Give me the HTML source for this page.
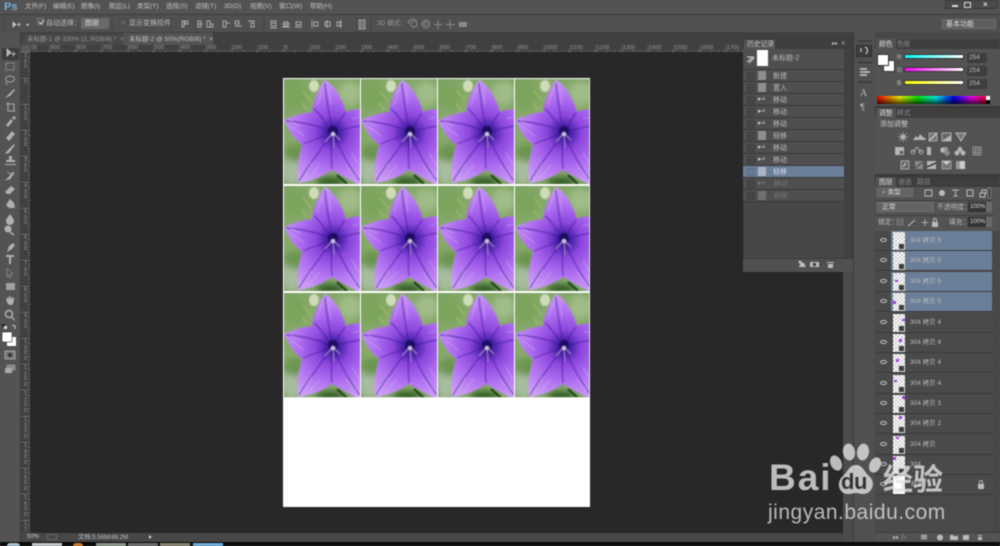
<!DOCTYPE html>
<html><head><meta charset="utf-8">
<style>
html,body{margin:0;padding:0;background:#535353}
#p{position:relative;width:1000px;height:546px;overflow:hidden;background:#535353;font-family:"Liberation Sans","Noto Sans CJK SC",sans-serif;color:#bdbdbd;font-size:6.5px;filter:blur(.45px)}
#p div{position:absolute;white-space:nowrap}
.m{top:3px;line-height:8px;color:#c2c2c2}
.o{color:#bdbdbd;line-height:9px}
.rt{top:45px;line-height:7px;font-size:5.5px;color:#999;width:20px}
.rv{left:23px;width:5px;font-size:5.5px;line-height:5.6px;color:#999;text-align:center;white-space:normal!important}
.h{left:743px;width:101px;height:11px;background:#4f4f4f;border-bottom:1px solid #393939}
.h .c{left:4px;top:2px;width:6px;height:6px;background:#474747;border:1px solid #3e3e3e}
.h .t{left:30px;top:1.5px;line-height:9px;color:#bdbdbd;font-size:7px}
.h .i{left:15px;top:1px;width:8px;height:9px;background:#8f8f8f}
.h .v{left:15px;top:1px}
.l{left:875px;width:118px;height:19.4px;border-bottom:1px solid #393939;background:#4a4a4a}
.l .s{left:16px;top:0;width:101px;height:19.4px}
.l .tb{left:18px;top:1px;width:12px;height:18px;background:#fff;background-image:linear-gradient(45deg,#ccc 25%,transparent 25%,transparent 75%,#ccc 75%),linear-gradient(45deg,#ccc 25%,transparent 25%,transparent 75%,#ccc 75%);background-size:4px 4px;background-position:0 0,2px 2px}
.l .n{left:35px;top:5px;font-size:6.5px;line-height:9px;color:#bdbdbd}
.l .e{left:5px;top:7px;width:7px;height:4px;border:1px solid #c8c8c8;border-radius:50%/50%;box-sizing:border-box}
.l .cor{left:23px;top:12px;width:7px;height:7px;background:#3e3e3e;border:1px solid #ddd;box-sizing:border-box}
.l .dot{width:2.5px;height:2.5px;background:#a23fe8}
.tab{color:#aaa;line-height:9px}
</style></head><body>
<div id="p">
<!-- bars -->
<div style="left:0;top:0;width:1000px;height:14px;background:#535353;border-bottom:1px solid #3c3c3c"></div>
<div style="left:0;top:15px;width:1000px;height:17px;background:#505050"></div>
<div style="left:0;top:32px;width:1000px;height:13px;background:#404040"></div>
<div style="left:4px;top:1px;font-size:11px;font-weight:bold;line-height:12px;color:#6fb2dc">Ps</div>
<div class="m" style="left:25px">文件(F)</div><div class="m" style="left:53px">编辑(E)</div><div class="m" style="left:81px">图像(I)</div><div class="m" style="left:109px">图层(L)</div><div class="m" style="left:137px">类型(Y)</div><div class="m" style="left:166px">选择(S)</div><div class="m" style="left:195px">滤镜(T)</div><div class="m" style="left:224px">3D(D)</div><div class="m" style="left:250px">视图(V)</div><div class="m" style="left:279px">窗口(W)</div><div class="m" style="left:310px">帮助(H)</div>
<!-- window buttons -->
<div style="left:945px;top:0;width:53px;height:9px;background:#4a4a4a;border:1px solid #3a3a3a;box-sizing:border-box"></div>
<div style="left:952px;top:5px;width:6px;height:1.5px;background:#ddd"></div>
<div style="left:964px;top:2px;width:5px;height:4px;border:1px solid #ddd"></div>
<div style="left:983px;top:0;line-height:9px;color:#ddd;font-size:8px;font-weight:bold">×</div>
<!-- options -->
<div style="left:37px;top:18px;width:7px;height:7px;background:#5a5a5a;border:1px solid #777;box-sizing:border-box;"></div>
<div class="o" style="left:46px;top:19px;font-size:7px">自动选择：</div>
<div style="left:81px;top:18px;width:28px;height:11px;background:#6a6a6a;border-radius:1px"></div>
<div class="o" style="left:85px;top:19px;font-size:7px;color:#ddd">图层</div>
<div style="left:120px;top:19px;width:7px;height:7px;background:#5e5e5e;border:1px solid #444;box-sizing:border-box"></div>
<div class="o" style="left:129px;top:19px;font-size:7px">显示变换控件</div>
<div class="o" style="left:377px;top:19px;font-size:6.5px;color:#9a9a9a">3D 模式：</div>
<div style="left:942px;top:19px;width:54px;height:10px;background:#5e5e5e;border:1px solid #6e6e6e;box-sizing:border-box"></div>
<div class="o" style="left:946px;top:19.5px;font-size:7px;color:#ddd">基本功能</div>
<!-- options icons -->
<svg style="position:absolute;left:0;top:14px" width="430" height="20" fill="none" stroke="#b0b0b0" stroke-width="1">
<path d="M4 3V17M112 3V17M171 3V17M264 3V17M357 3V17M371 3V17" stroke="#444"/>
<path d="M13 8v5l3-2.500zM17 10.500h4M19 8.500v4M26 10l1.500 1.500L29 10" fill="#ccc" stroke="#ccc" stroke-width=".7"/>
<path d="M39 8l2 2 3-4" stroke="#ddd"/>
<path d="M182 7h2v6h-2zM185 7h3v3h-3zM197 10h6M198 7h3v6h-3zM207 7h3v6h-3zM210 10h3v3h-3zM223 7h3v6h-3zM226 9h4M235 7h4v3h-4zM235 12h7M248 7h7M251 9h3v4h-3zM270 7h7M271 9h5v3h-5zM270 14h7M282 10h8M284 8h4v4h-4zM282 13h8M296 8h5v3h-5zM295 13h7M312 6v8M314 8h4v4h-4zM327 6v8M325 8h5v4h-5zM341 6v8M337 8h3v4h-3zM359 6h2v9h-2zM363 6h2v9h-2z" stroke-width=".9"/>
<g stroke="#8a8a8a"><circle cx="414" cy="10" r="3"/><path d="M409 10a4 3 0 0 1 8-3"/><circle cx="426" cy="10" r="4"/><circle cx="426" cy="10" r="2"/></g>
</svg>
<svg style="position:absolute;left:430px;top:14px" width="30" height="20" fill="none" stroke="#8a8a8a"><path d="M8 6v9M4 10.500h8M20 6v9M16 10.500h9"/></svg>
<svg style="position:absolute;left:458px;top:14px" width="12" height="20" fill="#8a8a8a"><rect x="1" y="8" width="8" height="5"/></svg>
<!-- tabs -->
<div style="left:22px;top:34px;width:100px;height:11px;background:#484848"></div>
<div style="left:123px;top:33px;width:90px;height:12px;background:#535353"></div>
<div class="tab" style="left:27px;top:34.500px;font-size:6.500px;color:#999">未标题-1 @ 100% (2, RGB/8) * &nbsp;×</div>
<div class="tab" style="left:129px;top:34.500px;font-size:6.500px;color:#c2c2c2">未标题-2 @ 50%(RGB/8) * &nbsp;×</div>
<!-- left tools -->
<div style="left:0;top:32px;width:21px;height:510px;background:#535353;border-right:1px solid #3d3d3d;box-sizing:border-box"></div>
<div style="left:2px;top:48px;width:17px;height:12px;background:#3c3c3c"></div>
<!-- canvas -->
<div style="left:21px;top:45px;width:822px;height:488px;background:#282828"></div>
<div style="left:21px;top:45px;width:822px;height:7px;background:#404040"></div>
<div style="left:21px;top:45px;width:9px;height:488px;background:#404040"></div>
<div style="left:21px;top:45px;width:9px;height:7px;background:#5a5a5a"></div>
<!-- ruler ticks -->
<div style="left:30px;top:50px;width:813px;height:2px;background:repeating-linear-gradient(90deg,#7a7a7a 0,#7a7a7a .6px,transparent .6px,transparent 2.600px)"></div>
<div style="left:28px;top:52px;width:2px;height:481px;background:repeating-linear-gradient(180deg,#7a7a7a 0,#7a7a7a .6px,transparent .6px,transparent 2.600px)"></div>
<div style="left:30px;top:45px;width:813px;height:7px;background:repeating-linear-gradient(90deg,transparent 0,transparent 20px,#8a8a8a 20px,#8a8a8a 20.600px,transparent 20.600px,transparent 26px)"></div>
<div style="left:21px;top:52px;width:9px;height:481px;background:repeating-linear-gradient(180deg,#8a8a8a 0,#8a8a8a .6px,transparent .6px,transparent 26px);background-size:9px 26px"></div>
<div class="rt" style="left:31px">00</div><div class="rt" style="left:51px">900</div><div class="rt" style="left:77px">800</div><div class="rt" style="left:103px">700</div><div class="rt" style="left:129px">600</div><div class="rt" style="left:155px">500</div><div class="rt" style="left:181px">400</div><div class="rt" style="left:207px">300</div><div class="rt" style="left:233px">200</div><div class="rt" style="left:259px">100</div><div class="rt" style="left:285px">0</div><div class="rt" style="left:311px">100</div><div class="rt" style="left:337px">200</div><div class="rt" style="left:363px">300</div><div class="rt" style="left:389px">400</div><div class="rt" style="left:415px">500</div><div class="rt" style="left:441px">600</div><div class="rt" style="left:467px">700</div><div class="rt" style="left:493px">800</div><div class="rt" style="left:519px">900</div><div class="rt" style="left:545px">1000</div><div class="rt" style="left:571px">1100</div><div class="rt" style="left:597px">1200</div><div class="rt" style="left:623px">1300</div><div class="rt" style="left:649px">1400</div><div class="rt" style="left:675px">1500</div><div class="rt" style="left:701px">1600</div><div class="rt" style="left:727px">1700</div>
<div class="rv" style="top:54px">1<br>0<br>0</div><div class="rv" style="top:80px">0</div><div class="rv" style="top:106px">1<br>0<br>0</div><div class="rv" style="top:132px">2<br>0<br>0</div><div class="rv" style="top:158px">3<br>0<br>0</div><div class="rv" style="top:184px">4<br>0<br>0</div><div class="rv" style="top:210px">5<br>0<br>0</div><div class="rv" style="top:236px">6<br>0<br>0</div><div class="rv" style="top:262px">7<br>0<br>0</div><div class="rv" style="top:288px">8<br>0<br>0</div><div class="rv" style="top:314px">9<br>0<br>0</div><div class="rv" style="top:340px">1<br>0<br>0<br>0</div><div class="rv" style="top:366px">1<br>1<br>0<br>0</div><div class="rv" style="top:392px">1<br>2<br>0<br>0</div><div class="rv" style="top:418px">1<br>3<br>0<br>0</div><div class="rv" style="top:444px">1<br>4<br>0<br>0</div><div class="rv" style="top:470px">1<br>5<br>0<br>0</div><div class="rv" style="top:496px">1<br>6<br>0<br>0</div><div class="rv" style="top:522px">1<br>7</div>
<!-- document -->
<div style="left:283px;top:78px;width:307px;height:429px;background:#fff"></div>
<svg style="position:absolute;left:283px;top:78px" width="307" height="321" viewBox="0 0 307 321">
<defs>
<radialGradient id="bg" cx=".5" cy=".5" r=".75"><stop offset="0" stop-color="#8dab72"/><stop offset=".6" stop-color="#87a96c"/><stop offset="1" stop-color="#78a05e"/></radialGradient>
<radialGradient id="pt" gradientUnits="userSpaceOnUse" cx="49" cy="54" r="58"><stop offset="0" stop-color="#2a1278"/><stop offset=".13" stop-color="#4c24ac"/><stop offset=".3" stop-color="#8c46dc"/><stop offset=".58" stop-color="#ad6cf0"/><stop offset="1" stop-color="#d0a6f6"/></radialGradient>
<filter id="b1" x="-10%" y="-10%" width="120%" height="120%"><feGaussianBlur stdDeviation=".6"/></filter>
<filter id="b3" x="-20%" y="-20%" width="140%" height="140%"><feGaussianBlur stdDeviation="3.5"/></filter>
<clipPath id="cell"><rect width="76" height="105"/></clipPath>
<g id="fl" clip-path="url(#cell)">
<rect width="76" height="105" fill="url(#bg)"/>
<g filter="url(#b3)"><ellipse cx="12" cy="18" rx="12" ry="14" fill="#7ca45c"/><ellipse cx="66" cy="14" rx="12" ry="12" fill="#a0bc88"/><ellipse cx="8" cy="90" rx="10" ry="16" fill="#a8bda0"/><ellipse cx="46" cy="103" rx="14" ry="5" fill="#2e5a24"/><ellipse cx="12" cy="74" rx="12" ry="9" fill="#6a9450"/></g>
<ellipse cx="30" cy="7" rx="5" ry="6" fill="#cfdcb8" filter="url(#b1)"/>
<path d="M19 12l8 10M18 24l5 7" stroke="#a8c266" stroke-width="1" filter="url(#b1)"/>
<path d="M53 96l10 9" stroke="#1c3a14" stroke-width="2" filter="url(#b1)"/>
<path d="M41 1C50 5 58 20 62 33C68 30 74 30 80 31L80 108C70 104 58 97 48 91C38 98 26 103 14 104C12 92 14 78 18 66C10 60 4 51 0 41C8 37 18 34 28 33C29 22 35 8 41 1Z" fill="url(#pt)" filter="url(#b1)"/>
<g fill="none" stroke="#3f1c9e" stroke-width=".9" filter="url(#b1)" opacity=".8">
<path d="M49 54C46 40 42 20 41 4M49 54C38 47 18 43 2 42M49 54C60 50 70 48 76 47M49 54C40 66 26 84 15 102M49 54C56 70 66 90 76 102M49 54C47 68 47 80 48 90M49 54C40 42 34 32 30 30M49 54C54 44 58 38 61 34M49 54C38 58 26 62 19 65"/>
</g>
<g fill="none" stroke="#d8b8f8" stroke-width=".8" opacity=".6" filter="url(#b1)"><path d="M33 26L38 10M47 26L45 10M16 47L6 42M20 57L8 48M28 84L18 100M36 86L24 100M62 86L72 98M68 74L75 86M68 40L75 38"/></g>
<circle cx="49" cy="52" r="5" fill="#1c1060" filter="url(#b1)"/>
<path d="M49 54l-8 9M49 54l1 15M49 54l7 7" stroke="#b4a0c6" stroke-width="1" filter="url(#b1)"/>
<circle cx="49" cy="55" r="2.300" fill="#d0c3e6" filter="url(#b1)"/>
</g>
</defs>
<use href="#fl" x="1" y="1"/><use href="#fl" x="78" y="1"/><use href="#fl" x="155" y="1"/><use href="#fl" x="232" y="1"/>
<use href="#fl" x="1" y="108"/><use href="#fl" x="78" y="108"/><use href="#fl" x="155" y="108"/><use href="#fl" x="232" y="108"/>
<use href="#fl" x="1" y="215"/><use href="#fl" x="78" y="215"/><use href="#fl" x="155" y="215"/><use href="#fl" x="232" y="215"/>
<path d="M0 0H307V320H0Z" fill="none" stroke="#fff" stroke-width="1.500"/>
</svg>
<!-- tool icons -->
<svg style="position:absolute;left:0;top:45px" width="21" height="340" viewBox="0 45 21 340" fill="#b0b0b0" stroke="none">
<path d="M7 49v7l4-3.500zM11 54h5M13.500 51.500v5" stroke="#ccc" stroke-width=".8"/>
<rect x="6" y="63" width="8" height="7" fill="none" stroke="#a8a8a8" stroke-dasharray="1.500 1"/>
<ellipse cx="10" cy="79" rx="4.500" ry="3" fill="none" stroke="#a8a8a8"/><path d="M6 82l1 3" stroke="#a8a8a8"/>
<path d="M6 97l3-3 5-5 1 1-5 6zM5 98l2-2 1 1z"/>
<path d="M8 102v9h7M6 104h8v8" fill="none" stroke="#a8a8a8" stroke-width="1.100"/>
<path d="M6 125l5-6 2 2-5 6zM12 118l2-2 2 2-2 2z"/>
<path d="M6 138l6-7 3 3-6 7z"/>
<path d="M5 154l2-3 7-7 1 1-6 8z"/>
<path d="M9 156h3v4h3v2H6v-2h3zM5 164h11v1H5z"/>
<path d="M6 180l3-3 4-5 1 1-4 6zM7 172l4 2" stroke="#a8a8a8" stroke-width=".7"/>
<path d="M5 192l6-6 4 3-5 5h-3z"/>
<path d="M10 199l4 4 1 5-6 0-3-3z"/>
<path d="M10 214c2 3 4 5 4 7a4 4 0 0 1-8 0c0-2 2-4 4-7z"/>
<circle cx="8" cy="229" r="3.500"/><path d="M10 232l4 3" stroke="#b0b0b0" stroke-width="1.500"/>
<path d="M7 252l2-6 4-3 2 2-3 4z"/>
<path d="M6 255h8v2h-3v7H9v-7H6z"/>
<path d="M7 268l6 6-3 .5 1 3-1 .5-1.500-3-1.500 1.500z" stroke="#b0b0b0" stroke-width=".5" fill="none"/>
<rect x="6" y="283" width="9" height="7" fill="#a0a0a0"/>
<path d="M6 300c2-2 1-3 2-3l1 2v-3h1v3l1-3 1 3 1-2 1 1c0 4-1 8-4 7-2 0-3-3-4-5z"/>
<circle cx="9" cy="314" r="3.500" fill="none" stroke="#b0b0b0" stroke-width="1.500"/><path d="M11.500 317l3 3" stroke="#b0b0b0" stroke-width="1.500"/>
<rect x="2" y="324" width="3" height="3" fill="#222"/><rect x="4" y="326" width="3" height="3" fill="#ddd"/><path d="M12 325l3 1v3" fill="none" stroke="#ccc"/>
<rect x="7" y="337" width="9" height="9" fill="#fff"/><rect x="2" y="332" width="10" height="10" fill="#fff" stroke="#333" stroke-width=".6"/>
<rect x="5" y="351" width="10" height="8" fill="#777" stroke="#bbb" stroke-width=".7"/><circle cx="10" cy="355" r="2" fill="#333"/>
<rect x="7" y="365" width="8" height="5" fill="#888" stroke="#aaa" stroke-width=".6"/><rect x="5" y="368" width="7" height="5" fill="#aaa"/>
</svg>
<!-- status bar -->
<div style="left:21px;top:533px;width:822px;height:9px;background:#474747"></div>
<div style="left:27px;top:534px;line-height:7px;font-size:6px;color:#ccc">50%</div>
<div style="left:47px;top:534px;width:10px;height:6px;border:1px solid #666;box-sizing:border-box"></div>
<div style="left:78px;top:534px;line-height:7px;font-size:6.200px;color:#bdbdbd">文档:5.56M/48.2M</div>
<div style="left:149px;top:535px;width:0;height:0;border-left:3px solid #ccc;border-top:2.500px solid transparent;border-bottom:2.500px solid transparent"></div>
<!-- taskbar -->
<div style="left:0;top:542px;width:1000px;height:4px;background:#0a0a0a"></div>
<div style="left:7px;top:543px;width:13px;height:3px;background:#a8c8da;border-radius:6px 6px 0 0"></div>
<div style="left:32px;top:543px;width:30px;height:3px;background:#c6ccd0"></div>
<div style="left:73px;top:543px;width:10px;height:3px;background:#d77a20;border-radius:5px 5px 0 0"></div>
<div style="left:96px;top:543px;width:30px;height:3px;background:#8a9a8a"></div>
<div style="left:128px;top:543px;width:30px;height:3px;background:#6e6e6e"></div>
<div style="left:160px;top:543px;width:30px;height:3px;background:#8a8470"></div>
<div style="left:193px;top:543px;width:30px;height:3px;background:#6fb0e0"></div>
<!-- history panel -->
<div style="left:843px;top:45px;width:10px;height:497px;background:#4c4c4c"></div>
<div style="left:853px;top:32px;width:22px;height:510px;background:#505050;border-left:1px solid #3a3a3a;box-sizing:border-box"></div>
<div style="left:743px;top:38px;width:110px;height:234px;background:#474747;border:1px solid #3a3a3a;box-sizing:border-box"></div>
<div style="left:743px;top:39px;width:110px;height:10px;background:#3e3e3e"></div>
<div style="left:744px;top:40px;width:31px;height:9px;background:#535353"></div>
<div style="left:747px;top:40px;line-height:9px;font-size:6.800px;color:#c2c2c2">历史记录</div>
<div style="left:832px;top:40px;line-height:8px;font-size:6px;color:#bbb">▸▸ &nbsp;≡</div>
<div class="h" style="top:49px;height:20px"><div style="left:14px;top:1px;width:11px;height:16px;background:#fff"></div><div class="t" style="left:29px;top:5px">未标题-2</div></div>
<svg style="position:absolute;left:746px;top:55px" width="9" height="9"><path d="M1 7l6-5M1 2h7M3 8l5-5" stroke="#ddd" fill="none"/></svg>
<div class="h" style="top:70px"><div class="c"></div><div class="i"></div><div class="t">新建</div></div>
<div class="h" style="top:82px"><div class="c"></div><div class="i"></div><div class="t">置入</div></div>
<div class="h" style="top:94px"><div class="c"></div><div class="v" style="color:#ccc;font-size:7px;line-height:9px">▸+</div><div class="t">移动</div></div>
<div class="h" style="top:106px"><div class="c"></div><div class="v" style="color:#ccc;font-size:7px;line-height:9px">▸+</div><div class="t">移动</div></div>
<div class="h" style="top:118px"><div class="c"></div><div class="v" style="color:#ccc;font-size:7px;line-height:9px">▸+</div><div class="t">移动</div></div>
<div class="h" style="top:130px"><div class="c"></div><div class="i"></div><div class="t">轻移</div></div>
<div class="h" style="top:142px"><div class="c"></div><div class="v" style="color:#ccc;font-size:7px;line-height:9px">▸+</div><div class="t">移动</div></div>
<div class="h" style="top:154px"><div class="c"></div><div class="v" style="color:#ccc;font-size:7px;line-height:9px">▸+</div><div class="t">移动</div></div>
<div class="h" style="top:166px;background:#6b7f99"><div class="c" style="background:#667a94;border-color:#5c6e86"></div><div class="i" style="background:#a8b4c4"></div><div class="t" style="color:#dde">轻移</div></div>
<div class="h" style="top:178px"><div class="c"></div><div class="v" style="color:#808080;font-size:7px;line-height:9px">▸+</div><div class="t" style="color:#777;font-style:italic">移动</div></div>
<div class="h" style="top:190px"><div class="c"></div><div class="i" style="background:#707070"></div><div class="t" style="color:#777;font-style:italic">轻移</div></div>
<div style="left:844px;top:49px;width:8px;height:209px;background:#414141"></div>
<div style="left:743px;top:258px;width:110px;height:14px;background:#505050;border-top:1px solid #3c3c3c;box-sizing:border-box"></div>
<svg style="position:absolute;left:796px;top:259px" width="46" height="10" fill="#bdbdbd"><path d="M3 8l2-5 3 1 2 4zM14 3h9v5h-9z"/><circle cx="4" cy="3" r="1.500"/><circle cx="18.500" cy="5.500" r="1.800" fill="#444"/><path d="M31 3h7v1h-7zM32 5h5v4h-5z"/></svg>
<!-- dock icons -->
<div style="left:856px;top:45px;width:16px;height:12px;background:#3d3d3d;border:1px solid #2f2f2f;box-sizing:border-box"></div>
<svg style="position:absolute;left:854px;top:40px" width="21" height="80" fill="none" stroke="#bbb"><path d="M4 1h14M4 22.500h14M4 42h14" stroke="#3d3d3d" stroke-width="2"/><path d="M7 8v4M11 7c3 1 3 4 1 7" stroke="#ddd"/><path d="M6 29h7M6 32h10M6 35h7" stroke="#ccc" stroke-width="1.500"/></svg>
<div style="left:860px;top:88px;font-size:10px;line-height:11px;color:#bbb;font-family:'Liberation Serif',serif">A</div>
<div style="left:860px;top:102px;font-size:9px;line-height:10px;color:#bbb">¶</div>
<!-- right panels -->
<div style="left:875px;top:32px;width:125px;height:510px;background:#484848"></div>
<div style="left:875px;top:38px;width:118px;height:495px;background:#4e4e4e"></div>
<div style="left:875px;top:39px;width:125px;height:10px;background:#3e3e3e"></div>
<div style="left:876px;top:39px;width:20px;height:10px;background:#535353"></div>
<div class="tab" style="left:879px;top:40px;color:#ddd;font-size:6.800px">颜色</div><div class="tab" style="left:897px;top:40px;font-size:6.800px;color:#888">色板</div>
<div style="left:875px;top:49px;width:125px;height:57px;background:#535353"></div>
<div style="left:883px;top:60px;width:10px;height:10px;background:#fff;border:1px solid #333"></div>
<div style="left:877px;top:54px;width:10px;height:10px;background:#fff;border:1px solid #333"></div>
<div style="left:897px;top:53px;line-height:9px;font-size:6.500px">R</div><div style="left:897px;top:66px;line-height:9px;font-size:6.500px">G</div><div style="left:897px;top:79px;line-height:9px;font-size:6.500px">B</div>
<div style="left:905px;top:55px;width:58px;height:3px;background:linear-gradient(90deg,#0ff,#fff);border:1px solid #333;margin:-1px"></div>
<div style="left:905px;top:68px;width:58px;height:3px;background:linear-gradient(90deg,#f0f,#fff);border:1px solid #333;margin:-1px"></div>
<div style="left:905px;top:81px;width:58px;height:3px;background:linear-gradient(90deg,#ff0,#fff);border:1px solid #333;margin:-1px"></div>
<div style="left:967px;top:53px;width:20px;height:10px;background:#3e3e3e;font-size:6.500px;line-height:10px;text-indent:2px">254</div>
<div style="left:967px;top:66px;width:20px;height:10px;background:#3e3e3e;font-size:6.500px;line-height:10px;text-indent:2px">254</div>
<div style="left:967px;top:79px;width:20px;height:10px;background:#3e3e3e;font-size:6.500px;line-height:10px;text-indent:2px">254</div>
<div style="left:877px;top:96px;width:113px;height:8px;background:linear-gradient(180deg,rgba(0,0,0,0),rgba(0,0,0,.75)),linear-gradient(90deg,#f00,#ff0 20%,#0f0 36%,#0ff 52%,#00f 68%,#f0f 84%,#f00)"></div>
<div style="left:986px;top:96px;width:4px;height:4px;background:#fff"></div><div style="left:986px;top:100px;width:4px;height:4px;background:#000"></div>
<!-- adjustments -->
<div style="left:875px;top:106px;width:125px;height:2px;background:#393939"></div>
<div style="left:875px;top:108px;width:125px;height:10px;background:#3e3e3e"></div>
<div style="left:876px;top:108px;width:20px;height:10px;background:#535353"></div>
<div class="tab" style="left:879px;top:109px;color:#ddd;font-size:6.800px">调整</div><div class="tab" style="left:897px;top:109px;font-size:6.800px;color:#888">样式</div>
<div style="left:875px;top:118px;width:125px;height:56px;background:#535353"></div>
<div style="left:880px;top:119.500px;line-height:9px;font-size:7px;color:#ccc">添加调整</div>
<svg style="position:absolute;left:895px;top:130px" width="90" height="42" fill="#b5b5b5" stroke="none">
<circle cx="8" cy="7" r="2.500"/><path d="M8 2v10M3 7h10M4.500 3.500l7 7M11.500 3.500l-7 7" stroke="#b5b5b5" stroke-width=".7"/>
<path d="M18 10l3-4 2 2 2-4 3 3 2 1 1 2z"/>
<rect x="34" y="3" width="8" height="8" fill="#777" stroke="#bbb" stroke-width=".7"/><path d="M34 11l8-8" stroke="#ddd"/>
<rect x="47" y="3" width="9" height="8" fill="#666" stroke="#ccc" stroke-width=".7"/><path d="M47 11l9-6v6z"/>
<path d="M61 3h10l-5 8z" fill="#777" stroke="#ccc" stroke-width=".8"/>
<rect x="0" y="17" width="9" height="8"/><rect x="5" y="21" width="3" height="3" fill="#555"/>
<path d="M18 24a2 2 0 1 1 .1 0M26 24a2 2 0 1 1 .1 0M22 17l-4 5M22 17l4 5" fill="none" stroke="#bbb" stroke-width=".8"/>
<rect x="32" y="17" width="8" height="8"/><rect x="36" y="17" width="4" height="8" fill="#555"/>
<circle cx="48" cy="20" r="2.800"/><circle cx="52" cy="23" r="2.800" fill="#888"/><circle cx="51" cy="19" r="2" fill="#999"/>
<circle cx="65" cy="19.500" r="2.500"/><circle cx="62" cy="23" r="2.500"/><circle cx="68" cy="23" r="2.500"/>
<path d="M78 17h8v8h-8zM78 19.700h8M78 22.400h8M80.700 17v8M83.400 17v8" fill="none" stroke="#aaa" stroke-width=".7"/>
<rect x="6" y="31" width="8" height="8" fill="#666" stroke="#ccc" stroke-width=".7"/><path d="M8 37l3-4" stroke="#ddd"/>
<rect x="20" y="31" width="8" height="8" fill="#888"/><path d="M20 38l8-6" stroke="#444"/>
<rect x="32" y="31" width="9" height="8"/><path d="M32 37l9-4" stroke="#333" stroke-width="1.500"/>
<rect x="47" y="31" width="9" height="8" fill="#777" stroke="#bbb" stroke-width=".6"/><path d="M47 31l4.500 4 4.500-4" fill="#ccc"/>
<rect x="61" y="31" width="9" height="8" fill="#999"/><rect x="65" y="31" width="5" height="8" fill="#ccc"/>
</svg>
<!-- layers -->
<div style="left:875px;top:174px;width:125px;height:3px;background:#393939"></div>
<div style="left:875px;top:177px;width:125px;height:10px;background:#3e3e3e"></div>
<div style="left:876px;top:177px;width:20px;height:10px;background:#535353"></div>
<div class="tab" style="left:879px;top:177.500px;color:#ddd;font-size:6.800px">图层</div><div class="tab" style="left:898px;top:177.500px;font-size:6.800px;color:#888">通道</div><div class="tab" style="left:917px;top:177.500px;font-size:6.800px;color:#888">路径</div>
<div style="left:875px;top:187px;width:125px;height:44px;background:#535353"></div>
<div style="left:875px;top:200px;width:118px;height:1px;background:#3f3f3f"></div>
<div style="left:875px;top:215px;width:118px;height:1px;background:#3f3f3f"></div>
<div style="left:877px;top:188px;width:36px;height:9px;background:#636363;border:1px solid #6e6e6e;box-sizing:border-box;line-height:8px;font-size:6.500px;text-indent:4px;color:#ddd">⌕ 类型</div>
<svg style="position:absolute;left:922px;top:187px" width="76" height="12" fill="none" stroke="#bbb"><rect x="3" y="3" width="7" height="6"/><circle cx="20" cy="6" r="3" fill="#bbb" stroke="none"/><path d="M30 3h7M33.500 3v6M31.500 9h4" /><rect x="45" y="3" width="6" height="6"/><path d="M58 6h5v4h-5zM60 6V3h4v4" /><rect x="66" y="1" width="3" height="10" fill="#444" stroke="#777"/></svg>
<div style="left:877px;top:202px;width:57px;height:10px;background:#636363;border:1px solid #6e6e6e;box-sizing:border-box;line-height:9px;font-size:6.800px;text-indent:4px;color:#ddd">正常</div>
<div style="left:937px;top:202.500px;line-height:9px;font-size:6.800px">不透明度：</div>
<div style="left:968px;top:202px;width:18px;height:10px;background:#333;line-height:10px;font-size:6px;text-indent:2px;color:#ddd">100%</div>
<div style="left:986px;top:202px;width:6px;height:10px;background:#6a6a6a"></div>
<div style="left:878px;top:217.500px;line-height:9px;font-size:6.800px">锁定：</div>
<svg style="position:absolute;left:896px;top:217px" width="40" height="11" fill="none" stroke="#aaa"><rect x="1" y="2" width="6" height="6" fill="#666" stroke="#777"/><path d="M12 9l7-6" stroke-width="1.200"/><path d="M29 2v7M25.500 5.500h7"/></svg>
<svg style="position:absolute;left:930px;top:217px" width="10" height="11" fill="#bbb"><path d="M2 5h6v5H2z"/><path d="M3.500 5V3a1.500 1.500 0 0 1 3 0v2" fill="none" stroke="#bbb"/></svg>
<div style="left:949px;top:217.500px;line-height:9px;font-size:6.800px">填充：</div>
<div style="left:968px;top:217px;width:18px;height:10px;background:#333;line-height:10px;font-size:6px;text-indent:2px;color:#ddd">100%</div>
<div style="left:986px;top:217px;width:6px;height:10px;background:#6a6a6a"></div>
<!-- layer rows -->
<div class="l" style="top:231px"><div class="s" style="background:#6b7f99"></div><div class="e"></div><div class="tb"></div><div class="cor"></div><div class="n">304 拷贝 5</div></div>
<div class="l" style="top:251px"><div class="s" style="background:#6b7f99"></div><div class="e"></div><div class="tb"></div><div class="cor"></div><div class="n">304 拷贝 5</div></div>
<div class="l" style="top:271.500px"><div class="s" style="background:#6b7f99"></div><div class="e"></div><div class="tb"></div><div class="dot" style="left:20px;top:8px"></div><div class="cor"></div><div class="n">304 拷贝 5</div></div>
<div class="l" style="top:292px"><div class="s" style="background:#6b7f99"></div><div class="e"></div><div class="tb"></div><div class="dot" style="left:18px;top:9px"></div><div class="cor"></div><div class="n">304 拷贝 5</div></div>
<div class="l" style="top:312.500px"><div class="e"></div><div class="tb"></div><div class="dot" style="left:27px;top:6px"></div><div class="cor"></div><div class="n">304 拷贝 4</div></div>
<div class="l" style="top:333px"><div class="e"></div><div class="tb"></div><div class="dot" style="left:24px;top:6px"></div><div class="cor"></div><div class="n">304 拷贝 4</div></div>
<div class="l" style="top:353px"><div class="e"></div><div class="tb"></div><div class="dot" style="left:21px;top:6px"></div><div class="cor"></div><div class="n">304 拷贝 4</div></div>
<div class="l" style="top:373.500px"><div class="e"></div><div class="tb"></div><div class="dot" style="left:19px;top:6px"></div><div class="cor"></div><div class="n">304 拷贝 4</div></div>
<div class="l" style="top:394px"><div class="e"></div><div class="tb"></div><div class="dot" style="left:27px;top:2px"></div><div class="cor"></div><div class="n">304 拷贝 3</div></div>
<div class="l" style="top:414px"><div class="e"></div><div class="tb"></div><div class="dot" style="left:24px;top:2px"></div><div class="cor"></div><div class="n">304 拷贝 2</div></div>
<div class="l" style="top:434.500px"><div class="e"></div><div class="tb"></div><div class="dot" style="left:21px;top:2px"></div><div class="cor"></div><div class="n">304 拷贝</div></div>
<div class="l" style="top:455px"><div class="e"></div><div class="tb"></div><div class="dot" style="left:18px;top:2px"></div><div class="cor"></div><div class="n">304</div></div>
<div class="l" style="top:475px"><div class="e"></div><div style="left:18px;top:1px;width:12px;height:18px;background:#fff"></div><div class="n" style="font-style:italic">背景</div></div>
<div style="left:875px;top:495px;width:118px;height:37px;background:#4a4a4a"></div>
<svg style="position:absolute;left:976px;top:479px" width="10" height="11" fill="#bbb"><path d="M2 5h6v5H2z"/><path d="M3.500 5V3a1.500 1.500 0 0 1 3 0v2" fill="none" stroke="#bbb"/></svg>
<div style="left:875px;top:532px;width:125px;height:10px;background:#535353;border-top:1px solid #3d3d3d;box-sizing:border-box"></div>
<svg style="position:absolute;left:890px;top:533px" width="105" height="9" fill="#bbb"><path d="M3 4.500h5" stroke="#bbb" stroke-width="2.500" stroke-dasharray="2 1"/><rect x="31" y="1.500" width="6" height="5" fill="#999"/><circle cx="50" cy="4.500" r="3"/><path d="M60 2h3l1 1h4v4h-8zM73 2h6v5h-6zM88 2h4v1h-4zM88 4h4v3h-4z"/></svg>
<div style="left:901px;top:533px;font-size:7px;line-height:8px;font-style:italic;font-family:'Liberation Serif',serif;color:#888">fx</div>
<!-- watermark -->
<div style="left:769px;top:459px;font-size:37px;font-weight:bold;line-height:38px;color:rgba(225,225,225,.8);letter-spacing:2px">Bai</div>
<svg style="position:absolute;left:825px;top:438px" width="62" height="62" fill="rgba(225,225,225,.8)"><ellipse cx="24" cy="14" rx="6" ry="8.500" transform="rotate(-8 24 14)"/><ellipse cx="38" cy="14" rx="6" ry="8.500" transform="rotate(8 38 14)"/><ellipse cx="11" cy="25" rx="5.500" ry="8" transform="rotate(-25 11 25)"/><ellipse cx="50" cy="27" rx="5.500" ry="8" transform="rotate(25 50 27)"/><path d="M31 27c7 0 8 7 14 12 6 6 2 17-7 17-3 0-5-1-7-1s-5 1-8 1c-9 0-12-11-6-17 6-5 7-12 14-12z"/></svg>
<div style="left:841px;top:470px;font-size:22px;font-weight:bold;line-height:24px;color:#333;letter-spacing:-.5px;">du</div>
<div style="left:883px;top:464px;font-size:30px;font-weight:bold;line-height:34px;color:rgba(225,225,225,.8)">经验</div>
<div style="left:768px;top:501px;font-size:21px;line-height:24px;color:rgba(225,225,225,.78);letter-spacing:.5px">jingyan.baidu.com</div>
</div>
</body></html>
